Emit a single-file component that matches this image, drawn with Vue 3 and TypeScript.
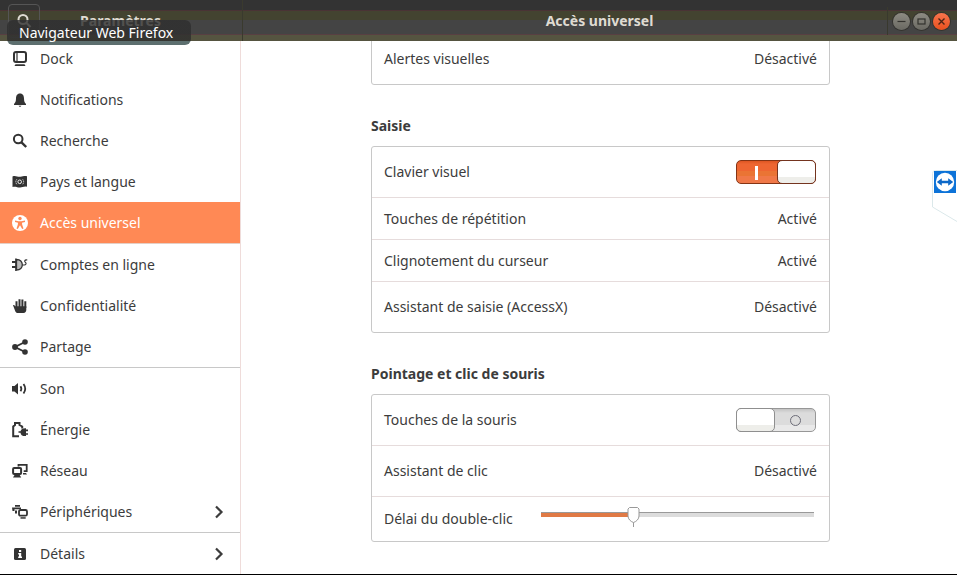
<script setup lang="ts">
import { computed, ref } from 'vue'

interface NavItem {
  id: string
  label: string
  arrow?: boolean
  line?: boolean
}

const items: NavItem[] = [
  { id: 'dock', label: 'Dock' },
  { id: 'bell', label: 'Notifications' },
  { id: 'search', label: 'Recherche' },
  { id: 'flag', label: 'Pays et langue' },
  { id: 'access', label: 'Accès universel' },
  { id: 'accounts', label: 'Comptes en ligne' },
  { id: 'privacy', label: 'Confidentialité' },
  { id: 'share', label: 'Partage', line: true },
  { id: 'sound', label: 'Son' },
  { id: 'power', label: 'Énergie' },
  { id: 'network', label: 'Réseau' },
  { id: 'devices', label: 'Périphériques', arrow: true, line: true },
  { id: 'details', label: 'Détails', arrow: true },
]

const current = ref('access')
const keyboard = ref(true)
const mouseKeys = ref(false)
const delay = ref(33)
const fill = computed(() => ({ '--fill': `${delay.value}%` }))
</script>

<template>
  <div class="window">
    <header class="titlebar">
      <div class="side-title">
        <button class="find" type="button" aria-label="Rechercher">
          <svg width="16" height="16" viewBox="0 0 16 16"><circle cx="7" cy="6.500" r="4.500" fill="none" stroke="currentColor" stroke-width="2" /><path d="M10.500 10l4 4" stroke="currentColor" stroke-width="2.200" /></svg>
        </button>
        <span class="title">Paramètres</span>
      </div>
      <h1 class="title main-title">Accès universel</h1>
      <div class="controls">
        <button type="button" class="ctl" aria-label="Réduire">
          <svg width="17" height="17" viewBox="0 0 17 17"><path d="M4.500 8.500h8" stroke="#33322e" stroke-width="1.200" /></svg>
        </button>
        <button type="button" class="ctl" aria-label="Agrandir">
          <svg width="17" height="17" viewBox="0 0 17 17"><rect x="5" y="6" width="7" height="5" fill="none" stroke="#33322e" stroke-width="1.200" /></svg>
        </button>
        <button type="button" class="ctl close" aria-label="Fermer">
          <svg width="17" height="17" viewBox="0 0 17 17"><path d="M5.500 5.500l6 6M11.500 5.500l-6 6" stroke="#4c2415" stroke-width="1.400" /></svg>
        </button>
      </div>
      <div class="tooltip" role="tooltip">Navigateur Web Firefox</div>
    </header>

    <div class="body">
      <nav class="sidebar">
        <a
          v-for="item in items"
          :key="item.id"
          href="#"
          class="nav-item"
          :class="{ active: item.id === current, line: item.line }"
          @click.prevent="current = item.id"
        >
          <svg class="icon" width="16" height="16" viewBox="0 0 16 16" fill="currentColor" aria-hidden="true">
            <template v-if="item.id === 'dock'">
              <rect x="2" y="1" width="12" height="10" rx="2" fill="none" stroke="currentColor" stroke-width="2" />
              <path d="M5 2v8" stroke="currentColor" stroke-width="1.200" /><path d="M3.500 13.300h9l1 1.700h-11z" />
            </template>
            <template v-else-if="item.id === 'bell'">
              <path d="M8 1.500C5 1.500 4 4 4 6.500 4 9.500 3.200 10.800 2 12v1h12v-1c-1.200-1.200-2-2.500-2-5.500C12 4 11 1.500 8 1.500zM6.500 13.700h3L8 15z" />
            </template>
            <template v-else-if="item.id === 'search'">
              <circle cx="6.200" cy="6" r="4.300" fill="none" stroke="currentColor" stroke-width="2" /><path d="M9.500 9.300l4.700 4.700" stroke="currentColor" stroke-width="2.400" />
            </template>
            <template v-else-if="item.id === 'flag'">
              <path d="M.5 2.500c3-1.500 5 .8 8 .3 2.500-.5 4-1.200 6.500-.6v10.500c-3-.8-4.500.7-7 .7-3 0-4.500-1.400-7.500-.4z" />
              <circle cx="7.700" cy="7.800" r="1.800" fill="none" stroke="#fff" stroke-width=".9" />
              <path d="M4.800 5.300c-1.300 1.500-1.300 3.500 0 5M10.700 5.300c1.300 1.500 1.300 3.500 0 5" fill="none" stroke="#ddd" stroke-width=".9" stroke-dasharray="1.300 .7" />
            </template>
            <template v-else-if="item.id === 'access'">
              <circle cx="8" cy="8" r="8" /><circle cx="8" cy="3.500" r="1.700" fill="#ff8955" />
              <path d="M3 5.600l3.600.6h2.800l3.600-.6v1.300l-3 .9.200 2 1.300 3.700-1.300.5L8 10.200 5.800 14l-1.300-.5 1.300-3.700.2-2-3-.9z" fill="#ff8955" />
            </template>
            <template v-else-if="item.id === 'accounts'">
              <path d="M0 5h4M0 10h4" stroke="currentColor" stroke-width="1.800" />
              <path d="M4.500 2.500v10.500c3.800 0 5.800-2 5.800-5.200s-2-5.300-5.800-5.300z" fill="#bbb" stroke="currentColor" stroke-width="1.300" />
              <path d="M3.800 1.500v12.500" stroke="currentColor" stroke-width="1.300" />
              <path d="M10.500 8h1.800c1.500 0 2.500-1.700 1.200-2.500s-1.300-3 1.800-2.500" fill="none" stroke="currentColor" stroke-width="1.100" />
            </template>
            <template v-else-if="item.id === 'privacy'">
              <path d="M4.500 10V3.200M7.500 9V1.200M10.400 9V1.600M13.300 10V3.200" stroke="currentColor" stroke-width="2" />
              <path d="M1 7.200c.8-.7 2 .2 2.500 1.300V8.300h10.800v3.400c0 1.800-1 3.300-2.800 3.300H6.200c-2 0-2.800-1.300-3.200-2.600z" />
            </template>
            <template v-else-if="item.id === 'share'">
              <path d="M13 3L3 8l10 5" fill="none" stroke="currentColor" stroke-width="1.900" />
              <circle cx="13" cy="3" r="2.800" /><circle cx="3" cy="8" r="2.900" /><circle cx="13" cy="13" r="2.800" />
            </template>
            <template v-else-if="item.id === 'sound'">
              <path d="M0 5h2.500L6 2v11.500L2.500 10.500H0z" />
              <path d="M8.500 5.200c1 1.500 1 3.600 0 5.100M11.500 3c2 2.800 2 6.700 0 9.500" fill="none" stroke="currentColor" stroke-width="1.800" />
            </template>
            <template v-else-if="item.id === 'power'">
              <path d="M7 14.200H1.200V4.500L3 3V1h4.500v2l2.700 1.500v2" fill="none" stroke="currentColor" stroke-width="2" />
              <path d="M6.500 10h3M13.500 8.300H16M13.500 12H16" stroke="currentColor" stroke-width="1.700" />
              <path d="M14 6.300v7.800c-3.700.2-5.500-1.200-5.500-3.900s1.800-4.100 5.500-3.900z" />
            </template>
            <template v-else-if="item.id === 'network'">
              <path d="M6.500 3.500V1.800h8.200v6.400h-3" fill="none" stroke="currentColor" stroke-width="1.800" />
              <rect x="1.100" y="5" width="8" height="6" rx="1" fill="none" stroke="currentColor" stroke-width="2" />
              <path d="M2.500 12h5.200l1.500 2.500H1zM11 10h3l1 1.600h-4z" />
            </template>
            <template v-else-if="item.id === 'devices'">
              <path d="M3 1h5v1.700H3zM0 3.500h9v1.700H2.500V7H.5zM3 6.500h2v3H3z" />
              <rect x="7" y="6" width="8" height="5.700" rx="1.500" fill="none" stroke="currentColor" stroke-width="1.800" />
              <path d="M8.500 13.200h5.200v1.500H8.500z" />
            </template>
            <template v-else>
              <rect x="2" y="2" width="12" height="12" rx="1.500" />
              <path d="M7 4h2.200v2H7zM6.200 7h3v3.500H10V12H6.200v-1.500H7v-2h-.8z" fill="#fff" />
            </template>
          </svg>
          <span class="nav-label">{{ item.label }}</span>
          <svg v-if="item.arrow" width="10" height="14" viewBox="0 0 10 14" aria-hidden="true"><path d="M2 1.500L7.500 7 2 12.500" fill="none" stroke="#3c3c3c" stroke-width="2.200" /></svg>
        </a>
      </nav>

      <main class="content">
        <div class="column">
          <section class="card clipped">
            <div class="row tall"><span>Alertes visuelles</span><span>Désactivé</span></div>
          </section>

          <h2>Saisie</h2>
          <section class="card">
            <div class="row tall">
              <label for="keyboard">Clavier visuel</label>
              <input id="keyboard" v-model="keyboard" class="switch" type="checkbox" role="switch" />
            </div>
            <div class="row"><span>Touches de répétition</span><span>Activé</span></div>
            <div class="row"><span>Clignotement du curseur</span><span>Activé</span></div>
            <div class="row tall"><span>Assistant de saisie (AccessX)</span><span>Désactivé</span></div>
          </section>

          <h2>Pointage et clic de souris</h2>
          <section class="card">
            <div class="row tall">
              <label for="mousekeys">Touches de la souris</label>
              <input id="mousekeys" v-model="mouseKeys" class="switch" type="checkbox" role="switch" />
            </div>
            <div class="row tall"><span>Assistant de clic</span><span>Désactivé</span></div>
            <div class="row slider-row">
              <label for="delay">Délai du double-clic</label>
              <input id="delay" v-model.number="delay" class="slider" type="range" min="0" max="100" :style="fill" />
            </div>
          </section>
        </div>
      </main>
    </div>

    <svg class="remote" width="25" height="54" viewBox="0 0 25 54" role="img" aria-label="TeamViewer">
      <path d="M25 .5H3.500Q.5.500.5 3.500V37L25 51.500" fill="#fff" stroke="#dbe8ea" />
      <rect x="2" y="1" width="22" height="22" fill="#0d73d8" />
      <circle cx="13" cy="12" r="9.200" fill="#fff" />
      <path d="M4.800 12l5-3.800v2.600h6.400V8.200l5 3.800-5 3.800v-2.600H9.800v2.600z" fill="#0d68c8" />
    </svg>
  </div>
</template>

<style>
body {
  margin: 0;
  background: #fff;
}
</style>

<style scoped>
* {
  box-sizing: border-box;
}
.window {
  position: relative;
  display: flex;
  flex-direction: column;
  height: 100vh;
  overflow: hidden;
  border-bottom: 1px solid #000;
  background: #fff;
  color: #3c3c3c;
  font: 14px/20px "Noto Sans", "Open Sans", sans-serif;
}
.titlebar {
  position: relative;
  z-index: 1;
  display: flex;
  flex: none;
  height: 41px;
  background: linear-gradient(#333 10px, #4a3335 10px 11px, #434330 11px 20px, #444 20px 34px, #583f42 34px 35px, #555440 35px);
  color: #dfdbd2;
}
.side-title {
  display: flex;
  align-items: center;
  width: 243px;
  padding-left: 8px;
  border-right: 1px solid #3a3a2e;
}
.find {
  display: flex;
  align-items: center;
  justify-content: center;
  width: 32px;
  height: 34px;
  padding: 0;
  border: 1px solid #555;
  border-radius: 4px;
  background: transparent;
  color: #dfdbd2;
}
.title {
  margin: 0;
  font-size: 14px;
  font-weight: 700;
  line-height: 41px;
}
.side-title .title {
  flex: 1;
  padding-right: 41px;
  text-align: center;
}
.main-title {
  flex: 1;
  padding-left: 69px;
  text-align: center;
}
.controls {
  display: flex;
  align-items: center;
  gap: 3px;
  width: 70px;
  margin-block: 7px 6px;
  padding-left: 5px;
  border-left: 1px solid #39392e;
}
.ctl {
  display: flex;
  width: 17px;
  height: 17px;
  padding: 0;
  border: 0;
  border-radius: 50%;
  background: linear-gradient(#8d8b82, #6a6962);
  box-shadow: 0 0 0 1px #34332f;
}
.close {
  background: linear-gradient(#f9754d, #e8501e);
}
.tooltip {
  position: absolute;
  top: 20px;
  left: 7px;
  min-width: 184px;
  padding: 3px 12px 2px;
  border-radius: 6px;
  background: linear-gradient(rgba(46, 46, 46, 0.8) 21px, #5d6f6f 21px);
  color: #fff;
}
.body {
  display: flex;
  flex: 1;
  min-height: 0;
}
.sidebar {
  flex: none;
  width: 241px;
  margin-top: -3px;
  border-right: 1px solid #efdcda;
}
.nav-item {
  display: flex;
  align-items: center;
  gap: 12px;
  height: 41px;
  padding: 0 16px 0 12px;
  color: inherit;
  text-decoration: none;
}
.nav-label {
  flex: 1;
}
.line,
.active {
  height: 42px;
  border-bottom: 1px solid #c8c8c8;
}
.active {
  background: #ff8955;
  border-color: #e5cfc5;
  color: #fff;
}
.icon {
  flex: none;
  color: #333;
}
.active .icon {
  color: #fff;
}
.content {
  flex: 1;
  padding: 0 0 0 3px;
}
.column {
  max-width: 459px;
  margin: 0 auto;
}
.card {
  border: 1px solid #c8c8c8;
  border-radius: 3px;
}
.clipped {
  margin-top: -8px;
}
.row {
  display: flex;
  align-items: center;
  justify-content: space-between;
  height: 42px;
  padding: 0 12px;
}
.tall {
  height: 51px;
}
.tall:first-child {
  height: 50px;
}
.row + .row {
  border-top: 1px solid #e6dcdc;
}
h2 {
  margin: 0;
  padding: 30px 0 9px;
  font-size: 14px;
  font-weight: 700;
  line-height: 22px;
}
.switch {
  appearance: none;
  position: relative;
  width: 80px;
  height: 24px;
  margin: 0 1px 0 0;
  border: 1px solid #979797;
  border-radius: 5px;
  background: linear-gradient(#c4c4c4, #dcdcdc 4px 16px, #e9e9e9 16px);
}
.switch::before {
  content: "";
  position: absolute;
  top: -1px;
  left: -1px;
  width: 39px;
  height: 24px;
  box-sizing: border-box;
  border: 1px solid #8f8f8f;
  border-radius: 5px;
  background: linear-gradient(#fff 16px, #eeeeea 16px);
}
.switch::after {
  content: "";
  position: absolute;
  top: 6px;
  left: 53px;
  width: 11px;
  height: 11px;
  box-sizing: border-box;
  border: 1px solid #6c6c78;
  border-radius: 50%;
}
.switch:checked {
  border-color: #853414;
  background: linear-gradient(#dd5522, #ee6632 3px 10px, #ea7434 10px 15px, #f07848 15px);
}
.switch:checked::before {
  left: 40px;
  border-color: #74341f;
}
.switch:checked::after {
  top: 5px;
  left: 18px;
  width: 3px;
  height: 14px;
  border: 0;
  border-radius: 0;
  background: #fff;
}
.slider-row {
  height: 45px;
}
.slider-row label {
  width: 157px;
}
.slider {
  appearance: none;
  flex: 1;
  min-width: 0;
  height: 20px;
  margin: 0 3px 4px 0;
  border-radius: 2px;
  background: linear-gradient(#999 1px, transparent 1px) 0 5px / 100% 5px no-repeat,
    linear-gradient(90deg, #e07a45 var(--fill), #dcdcdc var(--fill)) 0 5px / 100% 5px no-repeat;
}
.slider::-webkit-slider-thumb {
  appearance: none;
  width: 13px;
  height: 20px;
  border: 0;
  background: url("data:image/svg+xml,%3Csvg xmlns='http://www.w3.org/2000/svg' width='13' height='20'%3E%3Cpath d='M2.500.5h8l1.500 1.500v7c0 3-2.500 5.500-5.500 6.500C3.500 14.500 1 12 1 9V2zM6.500 15.500V20' fill='%23fff' stroke='%23999'/%3E%3C/svg%3E") no-repeat;
}
.remote {
  position: absolute;
  top: 170px;
  right: 0;
}
</style>
